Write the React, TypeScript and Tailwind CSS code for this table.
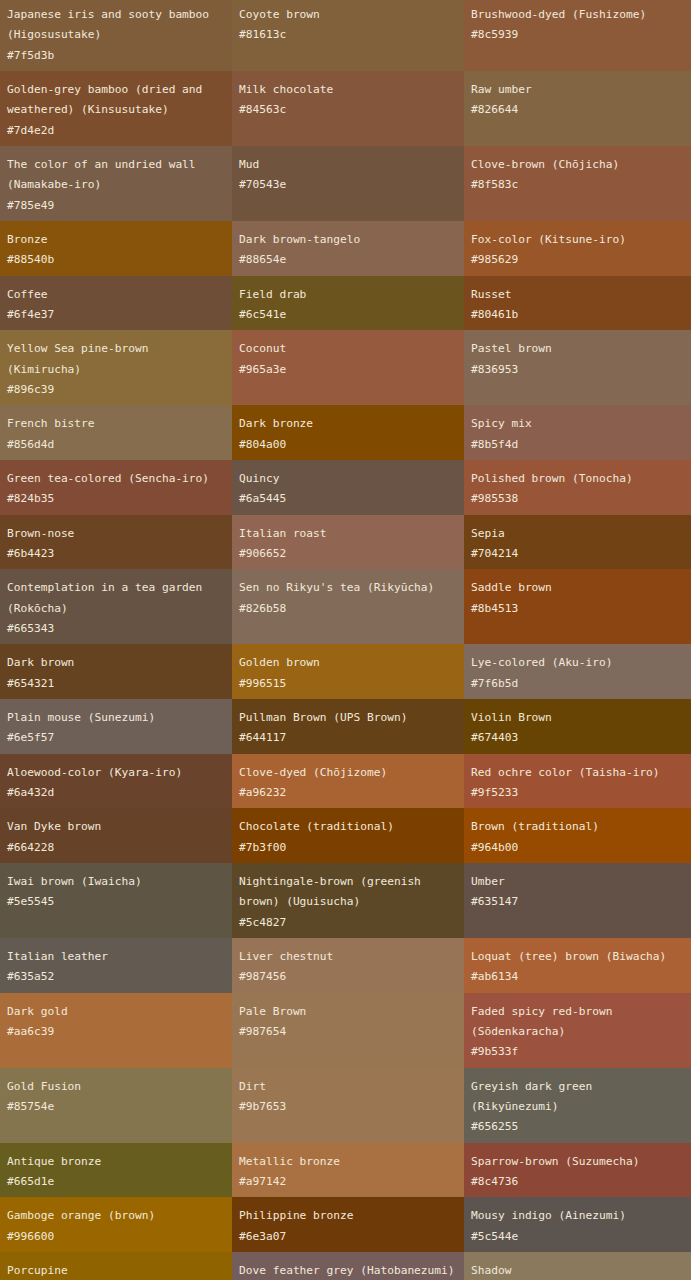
const COLORS: [string, string][] = [
  ["Japanese iris and sooty bamboo (Higosusutake)", "#7f5d3b"],
  ["Coyote brown", "#81613c"],
  ["Brushwood-dyed (Fushizome)", "#8c5939"],
  ["Golden-grey bamboo (dried and weathered) (Kinsusutake)", "#7d4e2d"],
  ["Milk chocolate", "#84563c"],
  ["Raw umber", "#826644"],
  ["The color of an undried wall (Namakabe-iro)", "#785e49"],
  ["Mud", "#70543e"],
  ["Clove-brown (Chōjicha)", "#8f583c"],
  ["Bronze", "#88540b"],
  ["Dark brown-tangelo", "#88654e"],
  ["Fox-color (Kitsune-iro)", "#985629"],
  ["Coffee", "#6f4e37"],
  ["Field drab", "#6c541e"],
  ["Russet", "#80461b"],
  ["Yellow Sea pine-brown (Kimirucha)", "#896c39"],
  ["Coconut", "#965a3e"],
  ["Pastel brown", "#836953"],
  ["French bistre", "#856d4d"],
  ["Dark bronze", "#804a00"],
  ["Spicy mix", "#8b5f4d"],
  ["Green tea-colored (Sencha-iro)", "#824b35"],
  ["Quincy", "#6a5445"],
  ["Polished brown (Tonocha)", "#985538"],
  ["Brown-nose", "#6b4423"],
  ["Italian roast", "#906652"],
  ["Sepia", "#704214"],
  ["Contemplation in a tea garden (Rokōcha)", "#665343"],
  ["Sen no Rikyu's tea (Rikyūcha)", "#826b58"],
  ["Saddle brown", "#8b4513"],
  ["Dark brown", "#654321"],
  ["Golden brown", "#996515"],
  ["Lye-colored (Aku-iro)", "#7f6b5d"],
  ["Plain mouse (Sunezumi)", "#6e5f57"],
  ["Pullman Brown (UPS Brown)", "#644117"],
  ["Violin Brown", "#674403"],
  ["Aloewood-color (Kyara-iro)", "#6a432d"],
  ["Clove-dyed (Chōjizome)", "#a96232"],
  ["Red ochre color (Taisha-iro)", "#9f5233"],
  ["Van Dyke brown", "#664228"],
  ["Chocolate (traditional)", "#7b3f00"],
  ["Brown (traditional)", "#964b00"],
  ["Iwai brown (Iwaicha)", "#5e5545"],
  ["Nightingale-brown (greenish brown) (Uguisucha)", "#5c4827"],
  ["Umber", "#635147"],
  ["Italian leather", "#635a52"],
  ["Liver chestnut", "#987456"],
  ["Loquat (tree) brown (Biwacha)", "#ab6134"],
  ["Dark gold", "#aa6c39"],
  ["Pale Brown", "#987654"],
  ["Faded spicy red-brown (Sōdenkaracha)", "#9b533f"],
  ["Gold Fusion", "#85754e"],
  ["Dirt", "#9b7653"],
  ["Greyish dark green (Rikyūnezumi)", "#656255"],
  ["Antique bronze", "#665d1e"],
  ["Metallic bronze", "#a97142"],
  ["Sparrow-brown (Suzumecha)", "#8c4736"],
  ["Gamboge orange (brown)", "#996600"],
  ["Philippine bronze", "#6e3a07"],
  ["Mousy indigo (Ainezumi)", "#5c544e"],
  ["Porcupine", "#8f6300"],
  ["Dove feather grey (Hatobanezumi)", "#755d5b"],
  ["Shadow", "#8a795d"],
];

export default function App() {
  return (
    <div className="h-[1280px] overflow-hidden bg-[#5c4a3a]">
      <div className="-mt-1 grid grid-cols-[232px_232px_1fr] font-['DejaVu_Sans_Mono',monospace] text-[11.2px] leading-[20.3px] text-[#f2e9dc]">
        {COLORS.map(([name, hex]) => (
          <div key={name} className="px-[7px] pt-[9px] pb-[5.1px]" style={{ backgroundColor: hex }}>
            <div>{name}</div>
            <div>{hex}</div>
          </div>
        ))}
      </div>
    </div>
  );
}
